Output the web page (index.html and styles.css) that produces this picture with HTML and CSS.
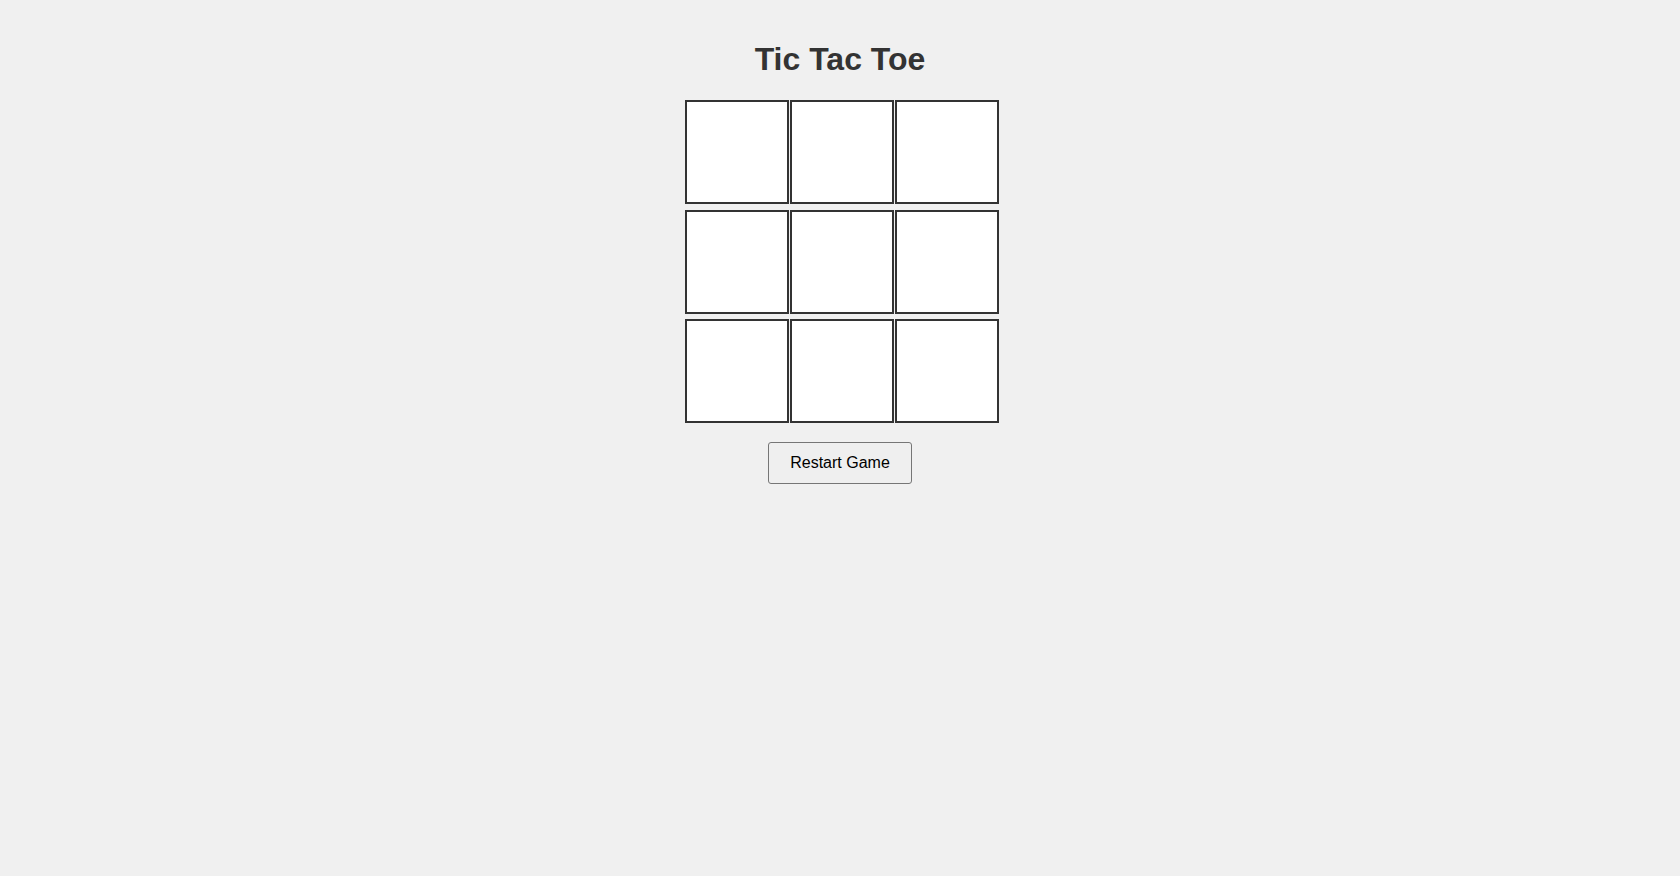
FILE: index.html
```html
<!DOCTYPE html>
<html lang="en">
<head>
<meta charset="utf-8">
<title>Tic Tac Toe</title>
<link rel="stylesheet" href="styles.css">
</head>
<body>
<main class="game">
  <h1 class="title">Tic Tac Toe</h1>
  <div class="board">
    <div class="cell"></div>
    <div class="cell"></div>
    <div class="cell"></div>
    <div class="cell"></div>
    <div class="cell"></div>
    <div class="cell"></div>
    <div class="cell"></div>
    <div class="cell"></div>
    <div class="cell"></div>
  </div>
  <button class="restart" type="button">Restart Game</button>
</main>
</body>
</html>
```
FILE: styles.css
```css
html, body {
  margin: 0;
  padding: 0;
  background: #f0f0f0;
}
body {
  font-family: "Liberation Sans", Arial, sans-serif;
  color: #333;
}
.game {
  display: flex;
  flex-direction: column;
  align-items: center;
  padding-top: 41px;
}
.title {
  margin: 0 0 22px;
  font-size: 32px;
  font-weight: bold;
  line-height: 37px;
  color: #333;
}
.board {
  display: grid;
  grid-template-columns: repeat(3, 100px);
  grid-auto-rows: 104px;
  column-gap: 5px;
  row-gap: 5.5px;
}
.cell {
  width: 100px;
  height: 100px;
  background: #fff;
  border: 2px solid #333;
}
.restart {
  margin-top: 19px;
  padding: 10px 21px 11px;
  font-family: "Liberation Sans", Arial, sans-serif;
  font-size: 16px;
  line-height: 19px;
  color: #000;
  background: #efefef;
  border: 1px solid #767676;
  border-radius: 3px;
}
```
